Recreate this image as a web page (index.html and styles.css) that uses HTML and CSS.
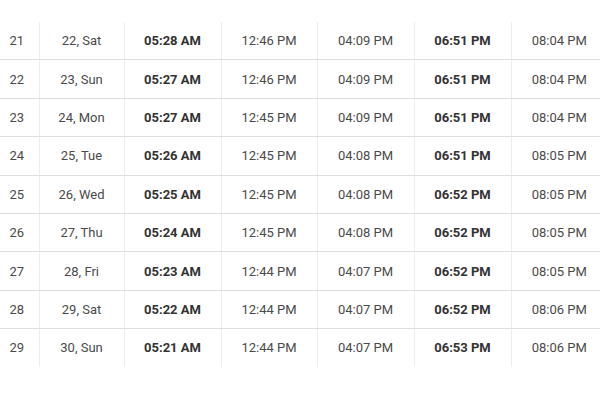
FILE: index.html
```html
<!DOCTYPE html>
<html>
<head>
<meta charset="utf-8">
<link rel="stylesheet" href="styles.css">
</head>
<body>
<div class="wrap">
<table class="times">
<colgroup>
<col class="c-num"><col class="c-date"><col class="c-t1"><col class="c-t2"><col class="c-t3"><col class="c-t4"><col class="c-t5">
</colgroup>
<tbody>
<tr><td>21</td><td>22, Sat</td><td class="b">05:28 AM</td><td>12:46 PM</td><td>04:09 PM</td><td class="b">06:51 PM</td><td>08:04 PM</td></tr>
<tr><td>22</td><td>23, Sun</td><td class="b">05:27 AM</td><td>12:46 PM</td><td>04:09 PM</td><td class="b">06:51 PM</td><td>08:04 PM</td></tr>
<tr><td>23</td><td>24, Mon</td><td class="b">05:27 AM</td><td>12:45 PM</td><td>04:09 PM</td><td class="b">06:51 PM</td><td>08:04 PM</td></tr>
<tr><td>24</td><td>25, Tue</td><td class="b">05:26 AM</td><td>12:45 PM</td><td>04:08 PM</td><td class="b">06:51 PM</td><td>08:05 PM</td></tr>
<tr><td>25</td><td>26, Wed</td><td class="b">05:25 AM</td><td>12:45 PM</td><td>04:08 PM</td><td class="b">06:52 PM</td><td>08:05 PM</td></tr>
<tr><td>26</td><td>27, Thu</td><td class="b">05:24 AM</td><td>12:45 PM</td><td>04:08 PM</td><td class="b">06:52 PM</td><td>08:05 PM</td></tr>
<tr><td>27</td><td>28, Fri</td><td class="b">05:23 AM</td><td>12:44 PM</td><td>04:07 PM</td><td class="b">06:52 PM</td><td>08:05 PM</td></tr>
<tr><td>28</td><td>29, Sat</td><td class="b">05:22 AM</td><td>12:44 PM</td><td>04:07 PM</td><td class="b">06:52 PM</td><td>08:06 PM</td></tr>
<tr><td>29</td><td>30, Sun</td><td class="b">05:21 AM</td><td>12:44 PM</td><td>04:07 PM</td><td class="b">06:53 PM</td><td>08:06 PM</td></tr>
</tbody>
</table>
</div>
</body>
</html>
```
FILE: styles.css
```css
html, body {
  margin: 0;
  padding: 0;
  background: #ffffff;
  overflow: hidden;
}
.wrap {
  width: 600px;
  height: 400px;
  overflow: hidden;
  padding-top: 22px;
  box-sizing: border-box;
}
.times {
  margin-left: -5px;
  border-collapse: collapse;
  table-layout: fixed;
  width: 612px;
  font-family: Roboto, "Liberation Sans", sans-serif;
  font-size: 13px;
  color: #4a4a4a;
}
.c-num { width: 44px; }
.c-date { width: 85px; }
.c-t1 { width: 97px; }
.c-t2 { width: 96px; }
.c-t3 { width: 97px; }
.c-t4 { width: 97px; }
.c-t5 { width: 96px; }
.times td {
  height: 37.4px;
  padding: 0;
  text-align: center;
  vertical-align: middle;
  border-bottom: 1px solid #dedede;
  border-left: 1px solid #ececec;
}
.times td:first-child {
  border-left: none;
}
.times tr:last-child td {
  border-bottom: none;
}
.times td.b {
  font-weight: 700;
  color: #333333;
}
```
